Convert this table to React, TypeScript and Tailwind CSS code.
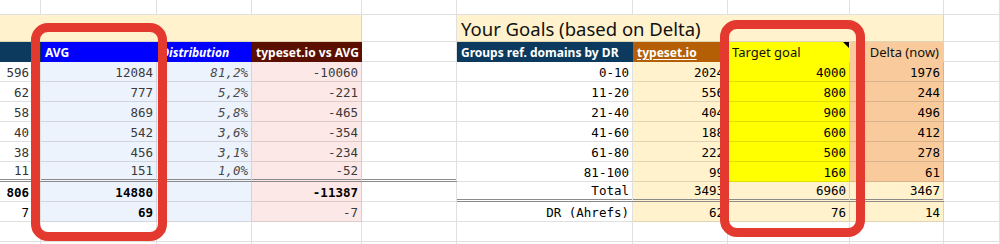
import React from "react";

const sans = "font-['Noto_Sans',sans-serif]";
const mono = "font-['DejaVu_Sans_Mono',monospace]";

const leftRows = [
  ["596", "12084", "81,2%", "-10060"],
  ["62", "777", "5,2%", "-221"],
  ["58", "869", "5,8%", "-465"],
  ["40", "542", "3,6%", "-354"],
  ["38", "456", "3,1%", "-234"],
  ["11", "151", "1,0%", "-52"],
];

const rightRows = [
  ["0-10", "2024", "4000", "1976"],
  ["11-20", "556", "800", "244"],
  ["21-40", "404", "900", "496"],
  ["41-60", "188", "600", "412"],
  ["61-80", "222", "500", "278"],
  ["81-100", "99", "160", "61"],
];

function Cell({
  className = "",
  children,
}: {
  className?: string;
  children?: React.ReactNode;
}) {
  return (
    <div
      className={`relative flex items-end overflow-hidden whitespace-nowrap border-r border-b border-black/[0.12] ${className}`}
    >
      {children}
    </div>
  );
}

const num = `${mono} text-[12.5px] leading-[16px] justify-end pr-[3px]`;
const head = `${sans} text-[12px] leading-[15px] font-bold text-white pb-[1px] px-[4px] border-transparent`;
const dblLine = "border-b-[3px] border-b-[#8a8a8a] border-double";

export default function App() {
  return (
    <div className="relative w-[1000px] h-[244px] overflow-hidden bg-white">
      <div className="grid grid-cols-[41px_116px_95px_110px_95px_176px_95px_122px_94px_56px] grid-rows-[15px_27px_repeat(11,20px)]">
        {/* row 0 */}
        {Array.from({ length: 10 }).map((_, i) => (
          <Cell key={`r0-${i}`} />
        ))}

        {/* title row */}
        <Cell className="col-span-4 bg-[#fff2cc]" />
        <Cell />
        <Cell className={`col-span-4 bg-[#fff2cc] pl-[4px] pb-[1px] ${sans} text-[18.5px] leading-[22px] text-[#111]`}>
          Your Goals (based on Delta)
        </Cell>
        <Cell />

        {/* header row */}
        <Cell className={`bg-[#0b3a5e] ${head} border-r-black/[0.12]`} />
        <Cell className={`bg-[#0000ff] ${head}`}>AVG</Cell>
        <Cell className={`bg-[#0000ff] ${head} italic`}>Distribution</Cell>
        <Cell className={`bg-[#5b0f00] ${head}`}>typeset.io vs AVG</Cell>
        <Cell />
        <Cell className={`bg-[#0b3a5e] ${head}`}>Groups ref. domains by DR</Cell>
        <Cell className={`bg-[#b45f06] ${head} underline underline-offset-2`}>typeset.io</Cell>
        <Cell className={`bg-[#ffff00] ${sans} text-[13px] leading-[15px] text-[#111] pb-[1px] px-[4px] border-transparent`}>
          Target goal
          <span className="absolute top-0 right-0 border-t-[6px] border-l-[6px] border-t-black border-l-transparent" />
        </Cell>
        <Cell className={`bg-[#f9cb9c] ${sans} text-[13px] leading-[15px] text-[#111] pb-[1px] px-[4px] justify-end border-transparent`}>
          Delta (now)
        </Cell>
        <Cell />

        {/* data rows */}
        {leftRows.map((l, i) => {
          const r = rightRows[i];
          const dbl = i === leftRows.length - 1 ? dblLine : "";
          return (
            <React.Fragment key={`d${i}`}>
              <Cell className={`${num} pr-[11px] text-[#333] ${dbl}`}>{l[0]}</Cell>
              <Cell className={`${num} bg-[#edf3fd] text-[#3a3a3a] ${dbl}`}>{l[1]}</Cell>
              <Cell className={`${num} bg-[#edf3fd] text-[#4a4a4a] italic ${dbl}`}>{l[2]}</Cell>
              <Cell className={`${num} bg-[#fce8e6] text-[#3a3a3a] ${dbl}`}>{l[3]}</Cell>
              <Cell className={dbl} />
              <Cell className={`${num} text-black`}>{r[0]}</Cell>
              <Cell className={`${num} bg-[#fff2cc] text-black`}>{r[1]}</Cell>
              <Cell className={`${num} bg-[#ffff00] text-black`}>{r[2]}</Cell>
              <Cell className={`${num} bg-[#f9cb9c] text-black`}>{r[3]}</Cell>
              <Cell />
            </React.Fragment>
          );
        })}

        {/* total row */}
        <Cell className={`${num} pr-[11px] font-bold text-black`}>806</Cell>
        <Cell className={`${num} bg-[#edf3fd] font-bold text-black`}>14880</Cell>
        <Cell className="bg-[#edf3fd]" />
        <Cell className={`${num} bg-[#fce8e6] font-bold text-black`}>-11387</Cell>
        <Cell />
        <Cell className={`${num} text-black ${dblLine}`}>Total</Cell>
        <Cell className={`${num} bg-[#fff2cc] text-black ${dblLine}`}>3493</Cell>
        <Cell className={`${num} bg-[#fff2cc] text-black ${dblLine}`}>6960</Cell>
        <Cell className={`${num} bg-[#fff2cc] text-black ${dblLine}`}>3467</Cell>
        <Cell />

        {/* DR row */}
        <Cell className={`${num} pr-[11px] text-black`}>7</Cell>
        <Cell className={`${num} bg-[#edf3fd] font-bold text-black`}>69</Cell>
        <Cell className="bg-[#edf3fd]" />
        <Cell className={`${num} bg-[#fce8e6] text-[#3a3a3a]`}>-7</Cell>
        <Cell />
        <Cell className={`${num} text-black`}>DR (Ahrefs)</Cell>
        <Cell className={`${num} bg-[#fff2cc] text-black`}>62</Cell>
        <Cell className={`${num} bg-[#fff2cc] text-black`}>76</Cell>
        <Cell className={`${num} bg-[#fff2cc] text-black`}>14</Cell>
        <Cell />

        {/* empty rows */}
        {Array.from({ length: 20 }).map((_, i) => (
          <Cell key={`e${i}`} />
        ))}
      </div>

      {/* highlight frames */}
      <div className="absolute left-[31px] top-[23px] w-[136px] h-[218px] rounded-[17px] border-[9px] border-[#e3392e]" />
      <div className="absolute left-[720px] top-[20px] w-[145px] h-[217px] rounded-[17px] border-[9px] border-[#e3392e]" />
    </div>
  );
}
